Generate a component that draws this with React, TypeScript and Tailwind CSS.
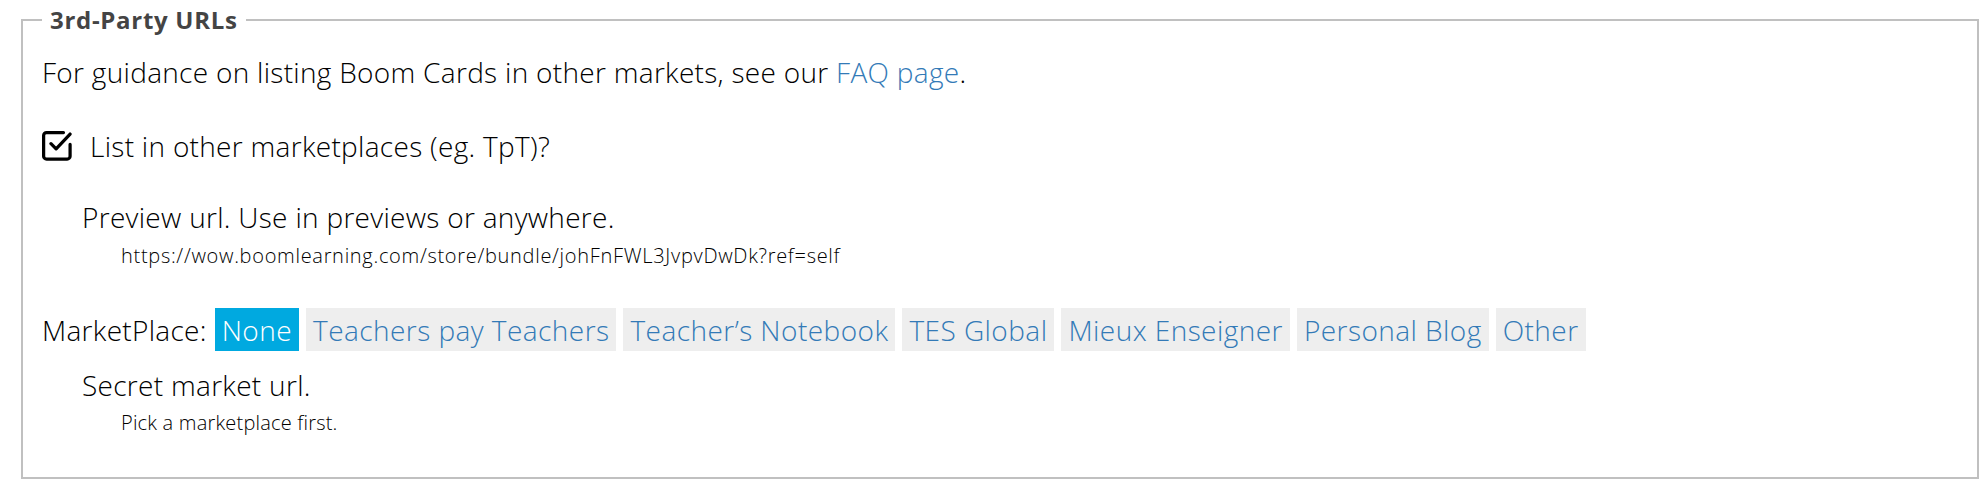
import React from "react";

const markets = [
  "None",
  "Teachers pay Teachers",
  "Teacher\u2019s Notebook",
  "TES Global",
  "Mieux Enseigner",
  "Personal Blog",
  "Other",
];

function CheckSquare() {
  return (
    <svg
      width="30"
      height="30"
      viewBox="1.9 1.9 20.4 20.4"
      fill="none"
      stroke="#000000"
      strokeWidth="2.2"
      strokeLinecap="round"
      strokeLinejoin="round"
    >
      <path d="M21 11V19a2 2 0 0 1-2 2H5a2 2 0 0 1-2-2V5a2 2 0 0 1 2-2h11.5" />
      <path d="m8 10.5 3.5 3.5L21 4" />
    </svg>
  );
}

export default function App() {
  return (
    <div className="w-[1988px] h-[490px] bg-white text-[#000000] font-['Open_Sans','Noto_Sans',sans-serif]">
      <fieldset className="ml-[21px] mr-[9px] mt-[6px] h-[473px] border-2 border-[#c0c0c0] px-[19px]">
        <legend className="px-2 text-[24px] leading-[28px] font-bold tracking-[0.7px] text-[#444444]">
          3rd-Party URLs
        </legend>
        <p className="mt-[21px] text-[28px] leading-[34px] font-light tracking-[0.3px]">
          For guidance on listing Boom Cards in other markets, see our{" "}
          <a className="text-[#337ab7]">FAQ page</a>.
        </p>
        <div className="mt-[42px] flex h-[30px] items-center gap-[18px]">
          <CheckSquare />
          <span className="text-[28px] leading-[34px] font-light tracking-[0.3px]">
            List in other marketplaces (eg. TpT)?
          </span>
        </div>
        <div className="pl-[40px] font-light">
          <p className="mt-[39px] text-[28px] leading-[34px] tracking-[0.3px]">
            Preview url. Use in previews or anywhere.
          </p>
          <p className="mt-[10px] pl-[39px] text-[20px] leading-[24px] tracking-[0.7px]">
            https://wow.boomlearning.com/store/bundle/johFnFWL3JvpvDwDk?ref=self
          </p>
        </div>
        <div className="mt-[40px] flex items-center gap-[7px] font-light tracking-[0.3px]">
          <span className="mr-[1px] text-[28px] leading-[34px]">MarketPlace:</span>
          {markets.map((m, i) => (
            <span
              key={m}
              className={
                i === 0
                  ? "h-[43px] px-[7px] flex items-center text-[28px] tracking-[0.45px] bg-[#00a9e0] text-white"
                  : "h-[43px] px-[7px] flex items-center text-[28px] tracking-[0.45px] bg-[#eeeeee] text-[#337ab7]"
              }
            >
              {m}
            </span>
          ))}
        </div>
        <div className="pl-[40px] font-light">
          <p className="mt-[17px] text-[28px] leading-[34px] tracking-[0.3px]">Secret market url.</p>
          <p className="mt-[9px] pl-[39px] text-[20px] leading-[24px] tracking-[0.2px]">
            Pick a marketplace first.
          </p>
        </div>
      </fieldset>
    </div>
  );
}
